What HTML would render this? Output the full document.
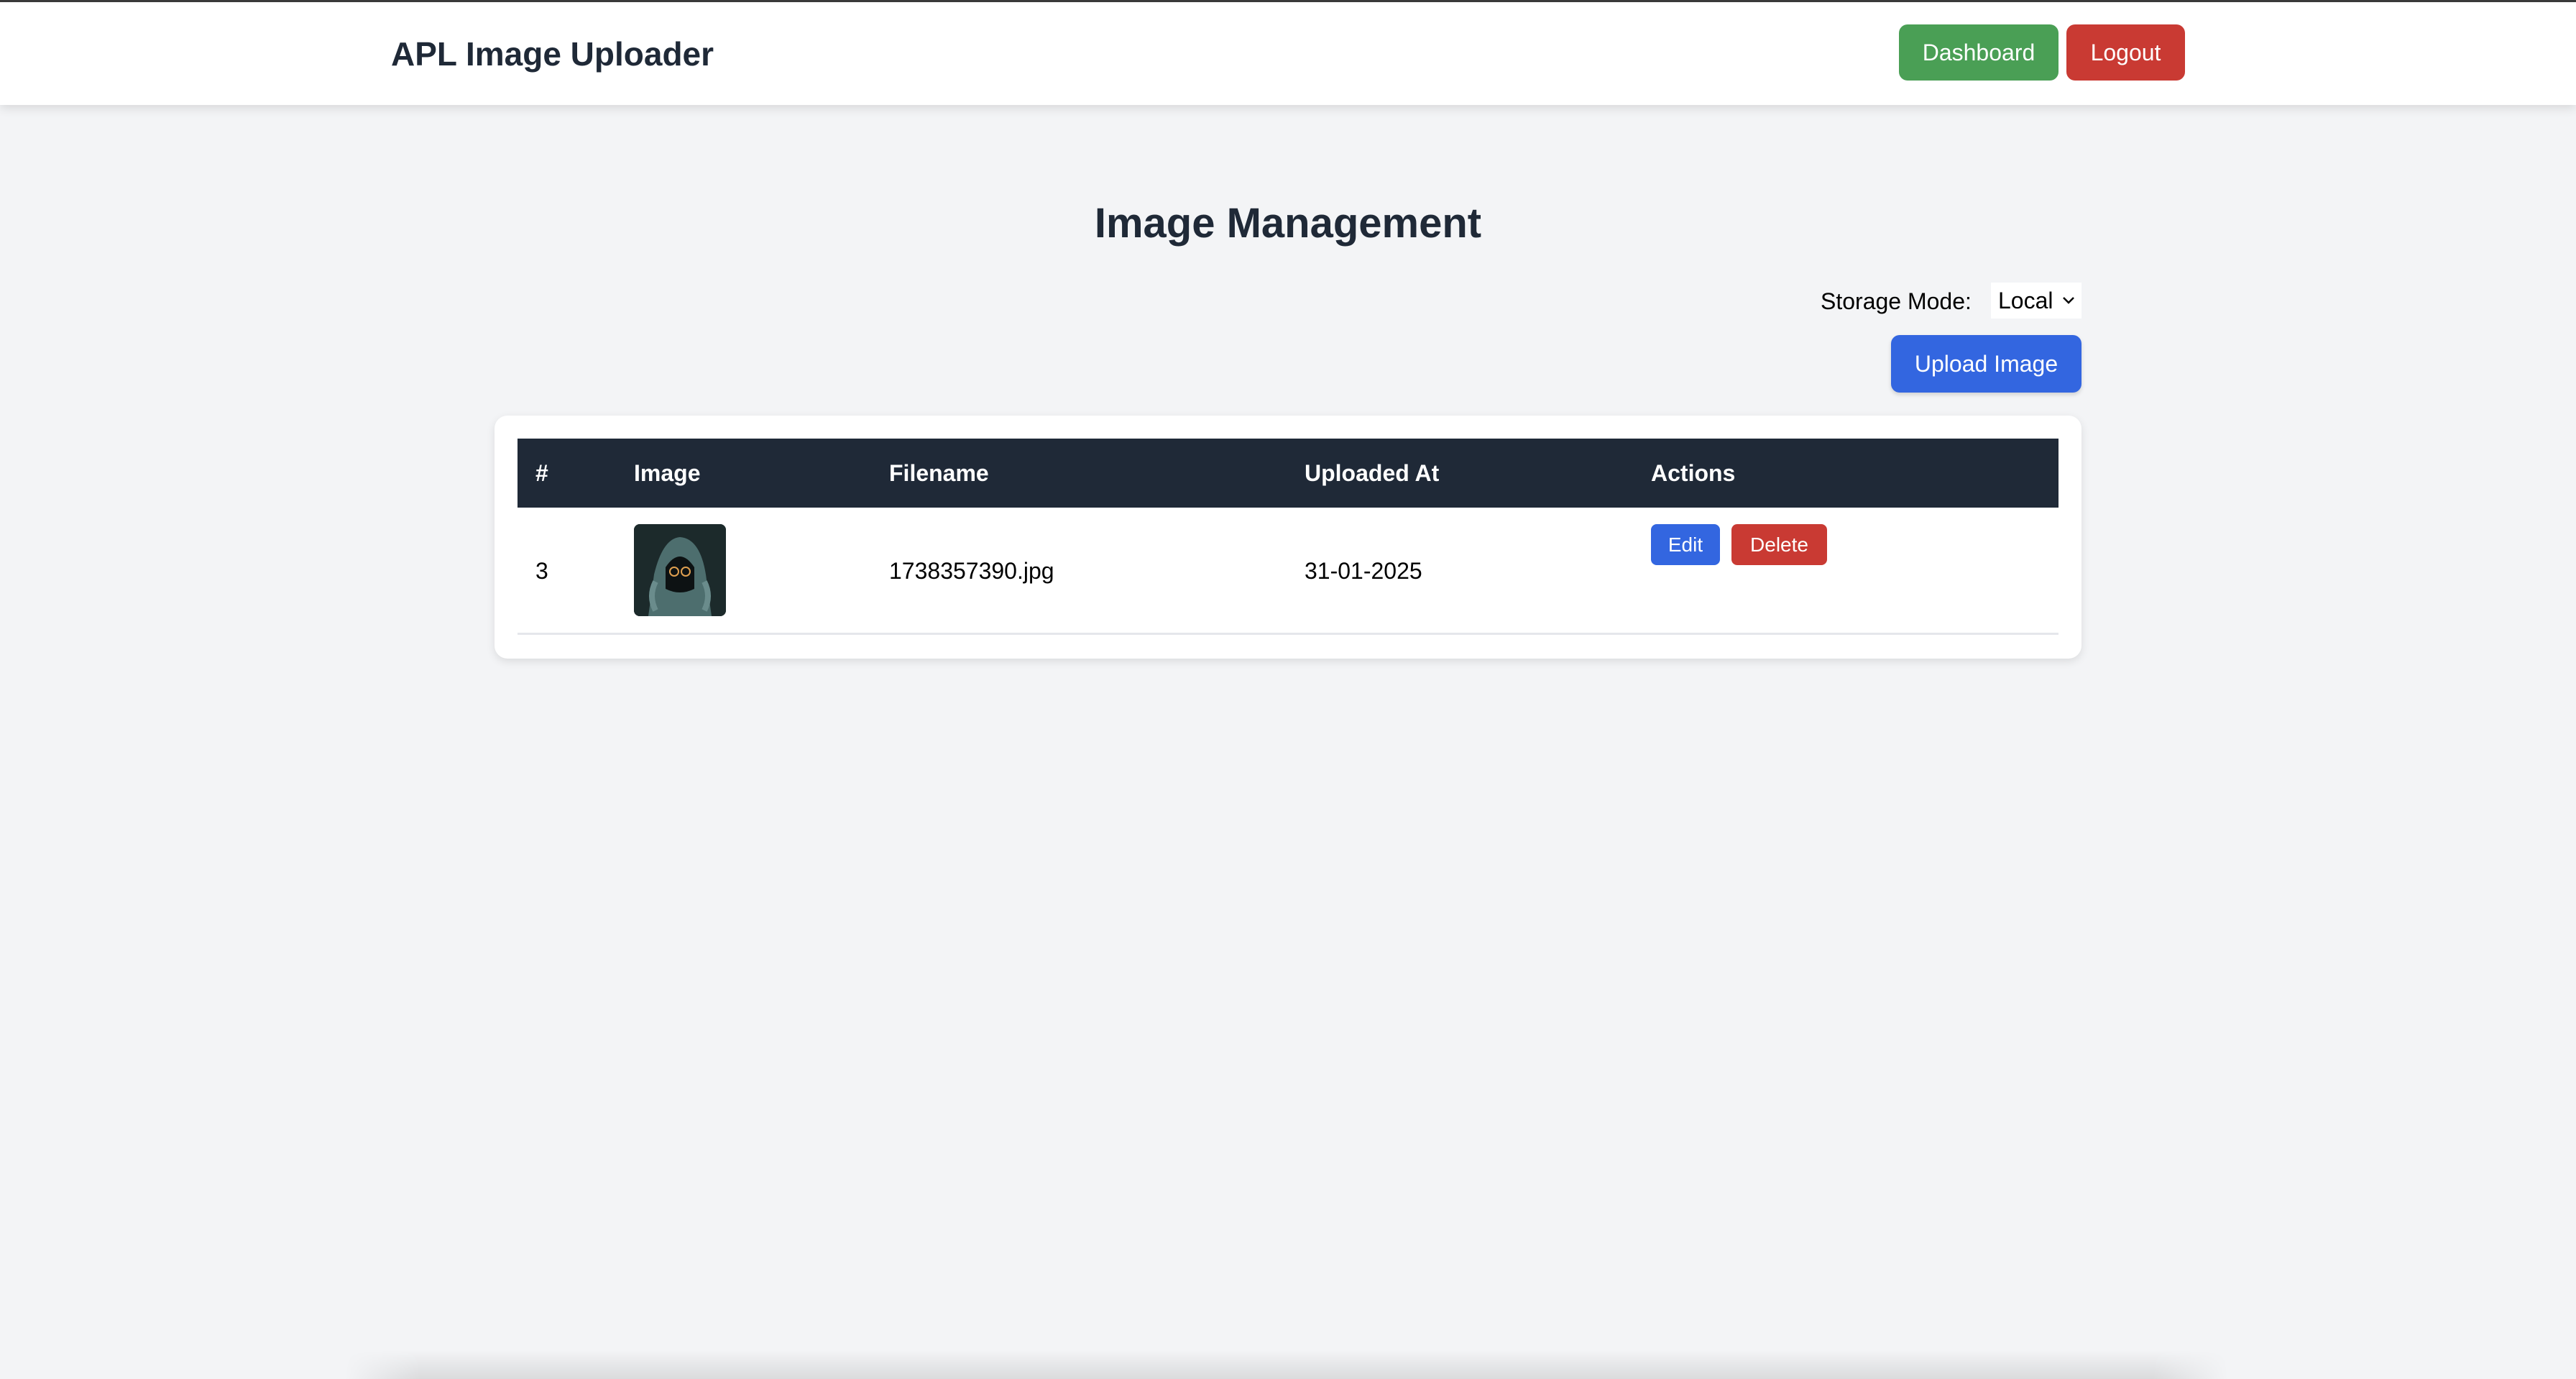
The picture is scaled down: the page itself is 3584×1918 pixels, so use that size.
<!DOCTYPE html>
<html><head><meta charset="utf-8"><style>
*{box-sizing:border-box;margin:0;padding:0}
html,body{width:3584px;height:1918px;overflow:hidden}
body{background:#f3f4f6;font-family:"Liberation Sans",Arial,sans-serif;position:relative;color:#000}
.topline{position:absolute;left:0;top:0;width:3584px;height:3px;background:#3a3a3a;z-index:5}
nav{position:absolute;left:0;top:0;width:3584px;height:146px;background:#fff;box-shadow:0 4px 14px rgba(0,0,0,.12);z-index:2}
.brand{position:absolute;left:544px;top:48px;font-size:46px;font-weight:bold;color:#1f2937;line-height:54px}
.btn{position:absolute;color:#fff;border-radius:12px;display:flex;align-items:center;justify-content:center;font-size:32px}
h1{position:absolute;left:0;width:3584px;top:276px;text-align:center;font-size:58px;font-weight:bold;color:#1f2937;line-height:70px}
.lbl{position:absolute;left:2533px;top:400px;font-size:32px;line-height:38px}
.sel{position:absolute;left:2770px;top:393px;width:126px;height:50px;background:#fff;font-size:32px;line-height:50px;padding-left:10px}
.sel svg{position:absolute;right:8px;top:18px}
.card{position:absolute;left:688px;top:578px;width:2208px;height:338px;background:#fff;border-radius:18px;box-shadow:0 4px 12px rgba(0,0,0,.1)}
.thead{position:absolute;left:720px;top:610px;width:2144px;height:96px;background:#1f2937}
.th{position:absolute;top:638px;color:#fff;font-weight:bold;font-size:32px;line-height:40px}
.td{position:absolute;top:774px;font-size:32px;line-height:40px}
.line{position:absolute;left:720px;top:880px;width:2144px;height:3px;background:#e5e7eb}
.thumb{position:absolute;left:882px;top:729px;width:128px;height:128px;border-radius:8px;overflow:hidden;background:#1d2a2b}
.foot{position:absolute;left:480px;top:1878px;width:2620px;height:40px;background:linear-gradient(to bottom,rgba(0,0,0,0),rgba(0,0,0,.1));-webkit-mask-image:linear-gradient(to right,transparent,#000 4%,#000 96%,transparent);mask-image:linear-gradient(to right,transparent,#000 4%,#000 96%,transparent)}
</style></head><body>
<div class="topline"></div>
<nav>
<div class="brand">APL Image Uploader</div>
<div class="btn" style="left:2642px;top:34px;width:222px;height:78px;background:#4a9f55">Dashboard</div>
<div class="btn" style="left:2875px;top:34px;width:165px;height:78px;background:#c93a33">Logout</div>
</nav>
<h1>Image Management</h1>
<div class="lbl">Storage Mode:</div>
<div class="sel">Local<svg width="20" height="14" viewBox="0 0 20 14"><path d="M3 3l7 7 7-7" stroke="#000" stroke-width="2.5" fill="none"/></svg></div>
<div class="btn" style="left:2631px;top:466px;width:265px;height:80px;background:#3366e0;box-shadow:0 3px 6px rgba(0,0,0,.15)">Upload Image</div>
<div class="card"></div>
<div class="thead"></div>
<div class="th" style="left:745px">#</div>
<div class="th" style="left:882px">Image</div>
<div class="th" style="left:1237px">Filename</div>
<div class="th" style="left:1815px">Uploaded At</div>
<div class="th" style="left:2297px">Actions</div>
<div class="td" style="left:745px">3</div>
<div class="thumb"><svg width="128" height="128" viewBox="0 0 128 128">
<rect width="128" height="128" fill="#1c2a2b"/>
<path d="M20 128 L28 70 Q40 20 64 18 Q92 20 100 70 L108 128Z" fill="#4d6e6e"/>
<path d="M44 60 Q64 30 84 60 L84 90 Q64 100 44 90Z" fill="#0d1213"/>
<circle cx="56" cy="66" r="6" fill="none" stroke="#e0a050" stroke-width="2"/>
<circle cx="72" cy="66" r="6" fill="none" stroke="#e0a050" stroke-width="2"/>
<path d="M30 80 Q20 100 30 120" stroke="#6a8c8c" stroke-width="8" fill="none"/>
<path d="M98 80 Q108 100 98 120" stroke="#6a8c8c" stroke-width="8" fill="none"/>
</svg></div>
<div class="td" style="left:1237px">1738357390.jpg</div>
<div class="td" style="left:1815px">31-01-2025</div>
<div class="btn" style="left:2297px;top:729px;width:96px;height:57px;background:#3366e0;font-size:28px;border-radius:8px">Edit</div>
<div class="btn" style="left:2409px;top:729px;width:133px;height:57px;background:#c93a33;font-size:28px;border-radius:8px">Delete</div>
<div class="line"></div>
<div class="foot"></div>
</body></html>
